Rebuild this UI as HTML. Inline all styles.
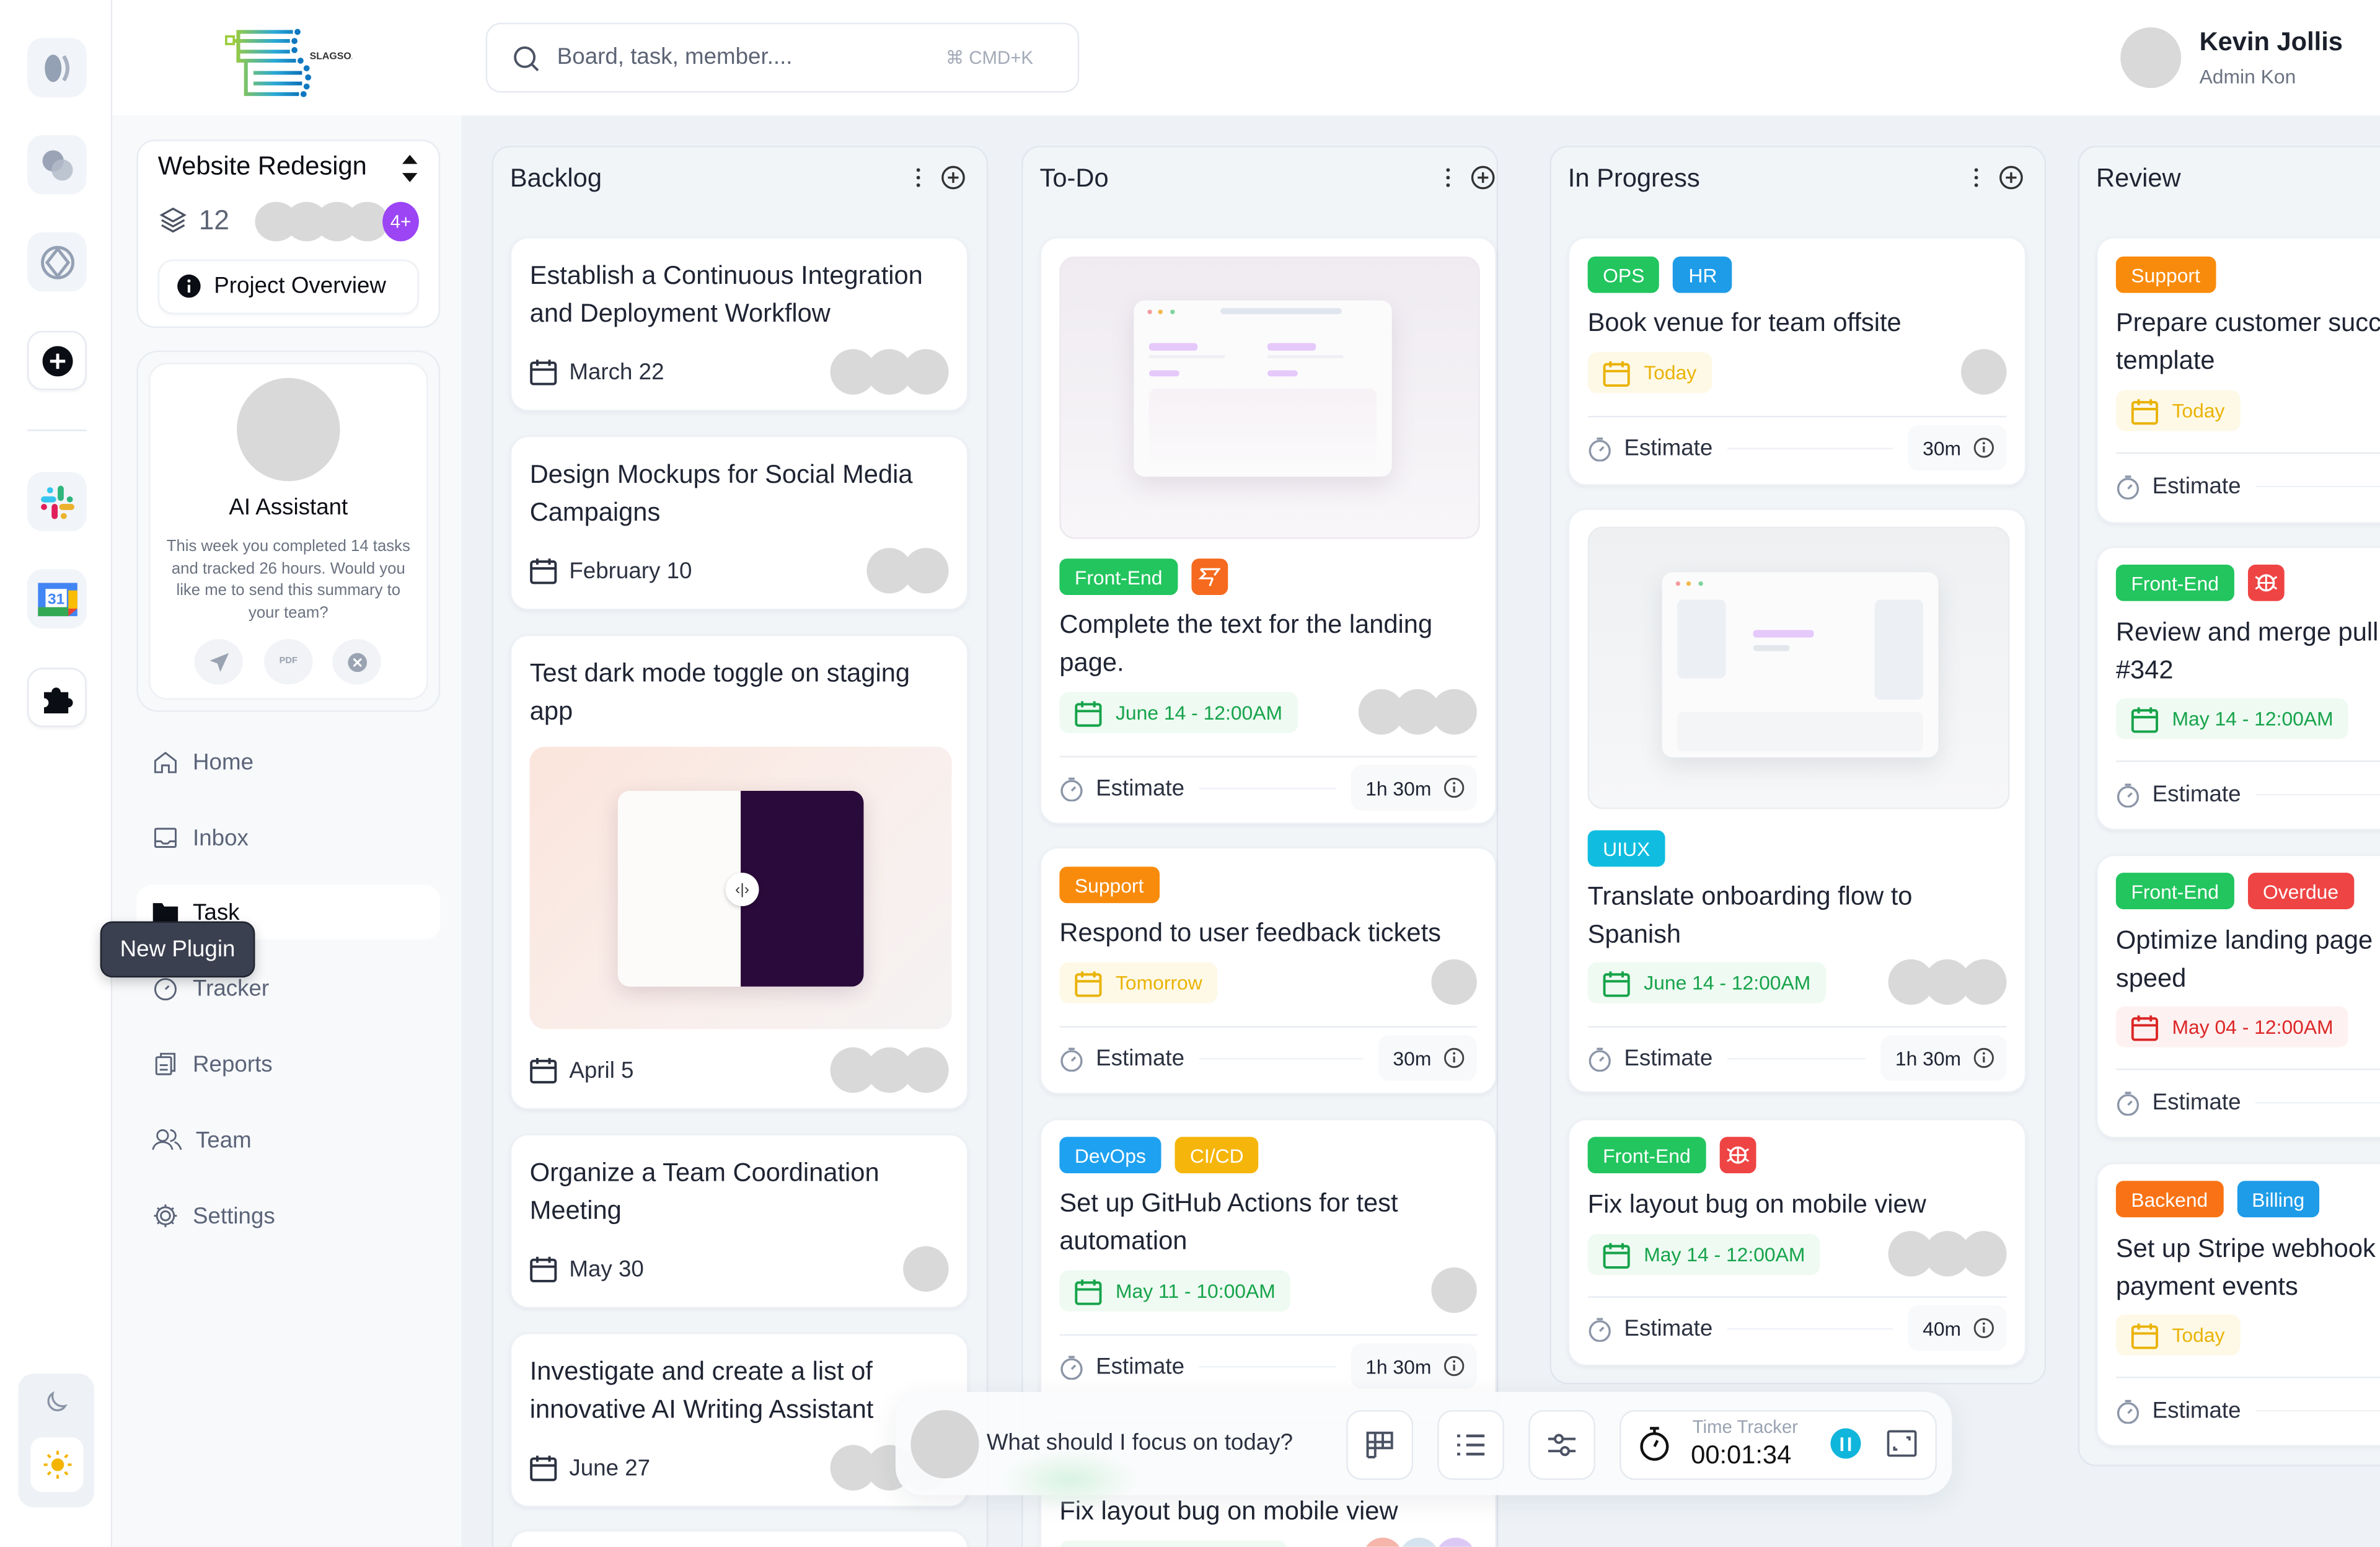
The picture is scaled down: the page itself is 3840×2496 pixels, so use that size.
<!DOCTYPE html>
<html><head><meta charset="utf-8">
<style>
*{box-sizing:border-box;margin:0;padding:0}
html,body{width:3840px;height:2494px;overflow:hidden;background:#eef2f6}
body{font-family:"Liberation Sans",Arial,sans-serif;color:#1f2433}
#w{position:absolute;left:0;top:0;width:1568px;height:1019px;transform:scale(2.44898);transform-origin:0 0;overflow:hidden;background:#eef2f6}
.a{position:absolute}
.rail{left:0;top:0;width:74px;height:1019px;background:#fff;border-right:1px solid #e8ecf1}
.tile{position:absolute;left:18px;width:39px;height:39px;border-radius:10px;background:#f1f4f8;display:flex;align-items:center;justify-content:center}
.tile.w{background:#fff;border:1px solid #e6eaf0;box-shadow:0 1px 2px rgba(0,0,0,.05)}
.hdr{left:74px;top:0;width:1494px;height:76px;background:#fff}
.side{left:74px;top:76px;width:231px;height:943px;background:#f7f9fb;border-right:1px solid #eef1f5}
.nav{position:absolute;left:100px;display:flex;align-items:center;gap:9px;font-size:15px;color:#5b6478;height:24px}
.col{position:absolute;top:96px;background:#f2f5f8;border:1px solid #e1e6ee;border-radius:12px}
.ch{position:absolute;top:108px;font-size:17px;color:#1f2433}
.card{position:absolute;background:#fff;border-radius:12px;box-shadow:0 1px 3px rgba(20,30,60,.06);border:1px solid #edf0f4;overflow:hidden}
.tt{position:absolute;left:12px;right:10px;font-size:17px;line-height:25px;color:#1f2433;white-space:nowrap}
.dt{position:absolute;left:12px;display:flex;align-items:center;gap:8px;font-size:15px;color:#2b3140;height:24px}
.pill{position:absolute;left:12px;height:27px;padding:0 10px;border-radius:6px;display:flex;align-items:center;gap:9px;font-size:13px}
.pg{background:#eefaf2;color:#16a34a}
.py{background:#fef9e7;color:#eab308}
.pr{background:#fef1f1;color:#dc2626}
.av{position:absolute;right:12px;display:flex}
.av i{display:block;width:30px;height:30px;border-radius:50%;background:#d9d9d9;margin-left:-6px}
.tags{position:absolute;left:12px;display:flex;gap:9px}
.tag{height:24px;padding:0 10px;border-radius:5px;color:#fff;font-size:13px;display:flex;align-items:center}
.ic{width:24px;height:24px;border-radius:5px;display:flex;align-items:center;justify-content:center}
.dv{position:absolute;left:12px;right:12px;height:1px;background:#e8ecf1}
.est{position:absolute;left:12px;right:12px;height:30px;display:flex;align-items:center;font-size:15px;color:#2b3140}
.est .ln{flex:1;height:1px;background:#eef1f5;margin:0 10px}
.est .ep{background:#f7f9fb;border-radius:7px;height:30px;padding:0 8px 0 10px;display:flex;align-items:center;gap:8px;font-size:13px;color:#1f2433}
.btn{position:absolute;top:929px;width:44px;height:46px;background:#fff;border:1px solid #e6eaf0;border-radius:10px;display:flex;align-items:center;justify-content:center}
</style></head><body><div id="w">

<!-- rail -->
<div class="a rail">
 <div class="tile" style="top:25px"><svg width="24" height="24" viewBox="0 0 24 24"><ellipse cx="9" cy="12" rx="5.5" ry="9" fill="#94a0b4"/><path d="M16 4q5 8 0 16" stroke="#a8b1c1" stroke-width="2.5" fill="none"/></svg></div>
 <div class="tile" style="top:89px"><svg width="24" height="24" viewBox="0 0 24 24"><circle cx="9" cy="9" r="7" fill="#9aa4b6"/><circle cx="15" cy="15" r="7" fill="#b4bcca" opacity=".85"/></svg></div>
 <div class="tile" style="top:153px"><svg width="24" height="24" viewBox="0 0 24 24" fill="none" stroke="#94a0b4" stroke-width="2"><circle cx="12" cy="12" r="10"/><path d="M12 3L5 12l7 9 7-9z"/></svg></div>
 <div class="tile w" style="top:218px"><svg width="20" height="20" viewBox="0 0 20 20"><circle cx="10" cy="10" r="10" fill="#0b0d14"/><path d="M10 5v10M5 10h10" stroke="#fff" stroke-width="2"/></svg></div>
 <div class="a" style="left:18px;top:283px;width:39px;height:1px;background:#e3e8ef"></div>
 <div class="tile" style="top:311px"><svg width="26" height="26" viewBox="0 0 26 26"><rect x="2" y="9" width="10" height="4" rx="2" fill="#36c5f0"/><rect x="6" y="3" width="4" height="4" rx="2" fill="#36c5f0"/><rect x="13" y="2" width="4" height="10" rx="2" fill="#2eb67d"/><rect x="19" y="9" width="4" height="4" rx="2" fill="#2eb67d"/><rect x="14" y="14" width="10" height="4" rx="2" fill="#ecb22e"/><rect x="15" y="20" width="4" height="4" rx="2" fill="#ecb22e"/><rect x="9" y="14" width="4" height="10" rx="2" fill="#e01e5a"/><rect x="2" y="14" width="4" height="4" rx="2" fill="#e01e5a"/></svg></div>
 <div class="tile" style="top:375px"><svg width="26" height="22" viewBox="0 0 26 22"><rect x="0" y="0" width="26" height="22" fill="#4285f4"/><rect x="0" y="16" width="20" height="6" fill="#34a853"/><rect x="20" y="5" width="6" height="12" fill="#fbbc04"/><path d="M20 17h6l-6 5z" fill="#ea4335"/><rect x="5" y="4" width="14" height="12" fill="#fff"/><text x="12" y="14" font-size="10" font-weight="bold" fill="#4285f4" text-anchor="middle" font-family="Liberation Sans">31</text></svg></div>
 <div class="tile w" style="top:440px"><svg width="24" height="22" viewBox="0 0 24 22"><path d="M3 7h5a3 3 0 1 1 6 0h5v4a3 3 0 1 1 0 6v4H3v-4a3 3 0 1 0 0-6z" fill="#0b0d14"/></svg></div>
 <div class="a" style="left:12px;top:905px;width:50px;height:88px;background:#eef1f5;border-radius:10px"></div>
 <svg class="a" style="left:28px;top:915px" width="18" height="18" viewBox="0 0 24 24"><path d="M20 15A9 9 0 0 1 9 4a8 8 0 1 0 11 11z" fill="none" stroke="#8a94a6" stroke-width="1.8"/></svg>
 <div class="a" style="left:20px;top:947px;width:35px;height:36px;background:#fff;border-radius:8px;display:flex;align-items:center;justify-content:center"><svg width="20" height="20" viewBox="0 0 24 24"><circle cx="12" cy="12" r="5" fill="#f5b400"/><g stroke="#f5b400" stroke-width="2"><path d="M12 1v3M12 20v3M1 12h3M20 12h3M4.2 4.2l2.1 2.1M17.7 17.7l2.1 2.1M4.2 19.8l2.1-2.1M17.7 6.3l2.1-2.1"/></g></svg></div>
</div>

<!-- header -->
<div class="a hdr"></div>
<svg class="a" style="left:148px;top:18px" width="84" height="46" viewBox="0 0 84 46">
 <defs><linearGradient id="lg" x1="0" x2="1"><stop offset="0" stop-color="#9ccc3c"/><stop offset=".6" stop-color="#2aa9d6"/><stop offset="1" stop-color="#0a6fb8"/></linearGradient></defs>
 <g stroke="url(#lg)" stroke-width="2.5" fill="none"><path d="M6 9h3V3h36M9 9v13h38M9 9h34M9 16h34M14 22v22h34M19 30h32M19 37h32M19 44h30"/></g>
 <rect x="1" y="6" width="5" height="5" fill="none" stroke="#9ccc3c" stroke-width="1.5"/>
 <g fill="#1078c0"><circle cx="48" cy="3" r="2"/><circle cx="46" cy="9" r="2"/><circle cx="46" cy="15" r="2"/><circle cx="50" cy="22" r="2"/><circle cx="54" cy="27" r="2"/><circle cx="55" cy="33" r="2"/><circle cx="54" cy="39" r="2"/><circle cx="52" cy="44" r="2"/></g>
 <text x="56" y="21" font-size="6.5" font-weight="bold" fill="#333" font-family="Liberation Sans">SLAGSOA</text>
</svg>
<div class="a" style="left:320px;top:15px;width:391px;height:46px;border:1px solid #e6eaf0;border-radius:10px;background:#fff"></div>
<svg class="a" style="left:337px;top:29px" width="19" height="19" viewBox="0 0 24 24" fill="none" stroke="#4b5263" stroke-width="2"><circle cx="11" cy="11" r="8"/><path d="M17 17l5 5"/></svg>
<div class="a" style="left:367px;top:29px;font-size:15px;color:#5d6475">Board, task, member....</div>
<div class="a" style="left:623px;top:31px;font-size:12px;color:#a3aab7">&#8984; CMD+K</div>
<div class="a" style="left:1397px;top:18px;width:40px;height:40px;border-radius:50%;background:#d9d9d9"></div>
<div class="a" style="left:1449px;top:18px;font-size:17px;font-weight:bold;color:#1a1f2b">Kevin Jollis</div>
<div class="a" style="left:1449px;top:43px;font-size:13px;color:#6b7280">Admin Kon</div>

<!-- side -->
<div class="a side"></div>
<div class="a" style="left:90px;top:92px;width:200px;height:124px;background:#fff;border:1px solid #e8ecf1;border-radius:12px"></div>
<div class="a" style="left:104px;top:100px;font-size:17px;color:#0b0d14">Website Redesign</div>
<svg class="a" style="left:264px;top:102px" width="12" height="18" viewBox="0 0 12 18"><path d="M6 0l5 6H1zM6 18l5-6H1z" fill="#111"/></svg>
<svg class="a" style="left:104px;top:134px" width="20" height="22" viewBox="0 0 24 24" fill="none" stroke="#4b5263" stroke-width="1.6"><path d="M12 3l9 5-9 5-9-5z"/><path d="M3 12l9 5 9-5M3 16l9 5 9-5"/></svg>
<div class="a" style="left:131px;top:135px;font-size:18px;color:#5d6475">12</div>
<div class="a" style="left:168px;top:133px;display:flex"><i style="width:28px;height:26px;border-radius:50%;background:#d9d9d9"></i><i style="width:28px;height:26px;border-radius:50%;background:#d9d9d9;margin-left:-8px"></i><i style="width:28px;height:26px;border-radius:50%;background:#d9d9d9;margin-left:-8px"></i><i style="width:28px;height:26px;border-radius:50%;background:#d9d9d9;margin-left:-8px"></i><span style="width:24px;height:26px;border-radius:50%;background:#9b45f5;margin-left:-4px;color:#fff;font-size:12px;display:flex;align-items:center;justify-content:center">4+</span></div>
<div class="a" style="left:104px;top:171px;width:172px;height:36px;border:1px solid #edf0f4;border-radius:10px;background:#fff;box-shadow:0 1px 2px rgba(0,0,0,.04)"></div>
<svg class="a" style="left:116px;top:180px" width="17" height="17" viewBox="0 0 20 20"><circle cx="10" cy="10" r="9" fill="#0b0d14"/><rect x="9" y="9" width="2" height="6" fill="#fff"/><circle cx="10" cy="6" r="1.2" fill="#fff"/></svg>
<div class="a" style="left:141px;top:180px;font-size:15px;color:#0b0d14">Project Overview</div>

<div class="a" style="left:90px;top:231px;width:200px;height:238px;border:1px solid #e8ecf1;border-radius:14px"></div>
<div class="a" style="left:98px;top:239px;width:184px;height:222px;background:#fff;border:1px solid #edf0f4;border-radius:12px"></div>
<div class="a" style="left:156px;top:249px;width:68px;height:68px;border-radius:50%;background:#d9d9d9"></div>
<div class="a" style="left:98px;top:326px;width:184px;text-align:center;font-size:15px;color:#0b0d14">AI Assistant</div>
<div class="a" style="left:106px;top:353px;width:168px;text-align:center;font-size:10.5px;line-height:14.7px;color:#6b7280">This week you completed 14 tasks and tracked 26 hours. Would you like me to send this summary to your team?</div>
<div class="a" style="left:128px;top:421px;width:32px;height:30px;border-radius:50%;background:#f1f3f6;display:flex;align-items:center;justify-content:center"><svg width="15" height="15" viewBox="0 0 24 24"><path d="M22 2L2 10l8 3 3 9z" fill="#9aa3b2"/></svg></div>
<div class="a" style="left:174px;top:421px;width:32px;height:30px;border-radius:50%;background:#f1f3f6;display:flex;align-items:center;justify-content:center;font-size:6px;color:#9aa3b2;font-weight:bold">PDF</div>
<div class="a" style="left:219px;top:421px;width:32px;height:30px;border-radius:50%;background:#f1f3f6;display:flex;align-items:center;justify-content:center"><svg width="15" height="15" viewBox="0 0 24 24"><circle cx="12" cy="12" r="10" fill="#9aa3b2"/><path d="M8 8l8 8M16 8l-8 8" stroke="#fff" stroke-width="2"/></svg></div>

<div class="nav" style="top:490px"><svg width="18" height="18" viewBox="0 0 24 24" fill="none" stroke="#5b6478" stroke-width="1.6"><path d="M3 11l9-7 9 7v10h-6v-6H9v6H3z"/></svg>Home</div>
<div class="nav" style="top:540px"><svg width="18" height="18" viewBox="0 0 24 24" fill="none" stroke="#5b6478" stroke-width="1.6"><rect x="3" y="4" width="18" height="16" rx="1"/><path d="M3 15h5l2 2h4l2-2h5"/></svg>Inbox</div>
<div class="a" style="left:90px;top:583px;width:200px;height:36px;background:#fff;border-radius:10px"></div>
<div class="nav" style="top:589px;color:#0b0d14"><svg width="18" height="16" viewBox="0 0 24 20"><path d="M1 2h8l2 3h12v14H1z" fill="#0b0d14"/></svg>Task</div>
<div class="nav" style="top:639px"><svg width="18" height="18" viewBox="0 0 24 24" fill="none" stroke="#5b6478" stroke-width="1.6"><circle cx="12" cy="13" r="9"/><path d="M12 13l3-3"/></svg>Tracker</div>
<div class="nav" style="top:689px"><svg width="18" height="18" viewBox="0 0 24 24" fill="none" stroke="#5b6478" stroke-width="1.6"><rect x="4" y="6" width="13" height="15" rx="1"/><path d="M8 6V3h12v15h-3M7 13h7M7 17h7"/></svg>Reports</div>
<div class="nav" style="top:739px"><svg width="20" height="18" viewBox="0 0 28 24" fill="none" stroke="#5b6478" stroke-width="1.6"><circle cx="10" cy="8" r="5"/><path d="M1 21c1-5 5-7 9-7s8 2 9 7"/><path d="M17 3a5 5 0 0 1 0 10M21 14c3 1 5 4 6 7"/></svg>Team</div>
<div class="nav" style="top:789px"><svg width="18" height="18" viewBox="0 0 24 24" fill="none" stroke="#5b6478" stroke-width="1.6"><circle cx="12" cy="12" r="4"/><path d="M12 2v3M12 19v3M2 12h3M19 12h3M5 5l2 2M17 17l2 2M5 19l2-2M17 7l2-2"/><circle cx="12" cy="12" r="7.5"/></svg>Settings</div>
<div class="a" style="left:66px;top:607px;width:102px;height:37px;background:#3b4050;border-radius:8px;border:1px solid #1f2330;box-shadow:0 3px 8px rgba(0,0,0,.2);color:#fff;font-size:15px;display:flex;align-items:center;justify-content:center">New Plugin</div>

<!-- columns -->
<div class="col" style="left:324px;width:327px;height:940px"></div>
<div class="col" style="left:673px;width:314px;height:940px"></div>
<div class="col" style="left:1021px;width:327px;height:816px"></div>
<div class="col" style="left:1369px;width:260px;height:870px"></div>
<div class="ch" style="left:336px">Backlog</div>
<div class="ch" style="left:685px">To-Do</div>
<div class="ch" style="left:1033px">In Progress</div>
<div class="ch" style="left:1381px">Review</div>
<svg width="0" height="0" style="position:absolute"><defs>
<g id="hm"><circle cx="2" cy="3" r="1.2" fill="#333"/><circle cx="2" cy="8" r="1.2" fill="#333"/><circle cx="2" cy="13" r="1.2" fill="#333"/><circle cx="25" cy="8" r="7" fill="none" stroke="#333" stroke-width="1.4"/><path d="M25 4.5v7M21.5 8h7" stroke="#333" stroke-width="1.4"/></g>
<g id="cal"><rect x="1" y="3" width="16" height="14" rx="1.5" fill="none" stroke="currentColor" stroke-width="1.6"/><path d="M1 7.5h16M5 1v4M13 1v4" stroke="currentColor" stroke-width="1.6"/></g>
<g id="sw"><circle cx="8" cy="10" r="6.5" fill="none" stroke="#8c96a8" stroke-width="1.4"/><path d="M6 2h4M8 10l2.5-2.5" stroke="#8c96a8" stroke-width="1.4"/></g>
<g id="inf"><circle cx="7" cy="7" r="6" fill="none" stroke="#444" stroke-width="1.2"/><path d="M7 6v4" stroke="#444" stroke-width="1.3"/><circle cx="7" cy="4" r=".8" fill="#444"/></g>
<g id="bug"><circle cx="8" cy="8" r="5" fill="none" stroke="#fff" stroke-width="1.4"/><path d="M8 3v10M3 8h10M1 4l3 2M15 4l-3 2M1 12l3-2M15 12l-3-2" stroke="#fff" stroke-width="1.2"/></g>
</defs></svg>
<svg class="a" style="left:603px;top:109px" width="34" height="16"><use href="#hm"/></svg>
<svg class="a" style="left:952px;top:109px" width="34" height="16"><use href="#hm"/></svg>
<svg class="a" style="left:1300px;top:109px" width="34" height="16"><use href="#hm"/></svg>

<!-- BACKLOG -->
<div class="card" style="left:336px;top:156px;width:302px;height:115px">
 <div class="tt" style="top:12px">Establish a Continuous Integration<br>and Deployment Workflow</div>
 <div class="dt" style="top:76px"><svg width="18" height="18" style="color:#2b3140"><use href="#cal"/></svg>March 22</div>
 <div class="av" style="top:73px"><i></i><i></i><i></i></div>
</div>
<div class="card" style="left:336px;top:287px;width:302px;height:115px">
 <div class="tt" style="top:12px">Design Mockups for Social Media<br>Campaigns</div>
 <div class="dt" style="top:76px"><svg width="18" height="18" style="color:#2b3140"><use href="#cal"/></svg>February 10</div>
 <div class="av" style="top:73px"><i></i><i></i></div>
</div>
<div class="card" style="left:336px;top:418px;width:302px;height:313px">
 <div class="tt" style="top:12px">Test dark mode toggle on staging<br>app</div>
 <div class="a" style="left:12px;top:73px;width:278px;height:186px;border-radius:10px;background:linear-gradient(135deg,#fbe5dc 0%,#f9efec 60%,#f5f2f3 100%);overflow:hidden">
  <div class="a" style="left:58px;top:29px;width:162px;height:129px;border-radius:8px;overflow:hidden;box-shadow:0 4px 14px rgba(60,20,60,.15)">
   <div class="a" style="left:0;top:0;width:81px;height:129px;background:#fcfbfa"></div>
   <div class="a" style="left:81px;top:0;width:81px;height:129px;background:#2a0a3a"></div>
  </div>
  <div class="a" style="left:129px;top:83px;width:22px;height:22px;border-radius:50%;background:#fff;box-shadow:0 1px 3px rgba(0,0,0,.2);font-size:10px;display:flex;align-items:center;justify-content:center;color:#333">&#8249;|&#8250;</div>
 </div>
 <div class="dt" style="top:274px"><svg width="18" height="18" style="color:#2b3140"><use href="#cal"/></svg>April 5</div>
 <div class="av" style="top:271px"><i></i><i></i><i></i></div>
</div>
<div class="card" style="left:336px;top:747px;width:302px;height:115px">
 <div class="tt" style="top:12px">Organize a Team Coordination<br>Meeting</div>
 <div class="dt" style="top:76px"><svg width="18" height="18" style="color:#2b3140"><use href="#cal"/></svg>May 30</div>
 <div class="av" style="top:73px"><i></i></div>
</div>
<div class="card" style="left:336px;top:878px;width:302px;height:115px">
 <div class="tt" style="top:12px">Investigate and create a list of<br>innovative AI Writing Assistant</div>
 <div class="dt" style="top:76px"><svg width="18" height="18" style="color:#2b3140"><use href="#cal"/></svg>June 27</div>
 <div class="av" style="top:73px"><i></i><i></i><i></i></div>
</div>
<div class="card" style="left:336px;top:1008px;width:302px;height:60px"></div>

<!-- TODO -->
<div class="card" style="left:685px;top:156px;width:301px;height:387px">
 <div class="a" style="left:12px;top:12px;width:277px;height:186px;border-radius:10px;border:1px solid #ece8ee;background:linear-gradient(#efebf1,#f8f6f9)">
  <div class="a" style="left:48px;top:28px;width:170px;height:116px;background:#fbfbfc;border-radius:7px;box-shadow:0 6px 16px rgba(80,60,90,.12)">
   <i class="a" style="left:9px;top:6px;width:3px;height:3px;border-radius:50%;background:#f39c9c"></i><i class="a" style="left:16px;top:6px;width:3px;height:3px;border-radius:50%;background:#f3b94c"></i><i class="a" style="left:24px;top:6px;width:3px;height:3px;border-radius:50%;background:#7fd49a"></i>
   <i class="a" style="left:57px;top:5px;width:80px;height:4px;border-radius:2px;background:#e1e6ee"></i>
   <i class="a" style="left:10px;top:28px;width:32px;height:5px;border-radius:2px;background:#e6c9fb"></i><i class="a" style="left:88px;top:28px;width:32px;height:5px;border-radius:2px;background:#e6c9fb"></i>
   <i class="a" style="left:10px;top:36px;width:50px;height:2px;background:#eef0f4"></i><i class="a" style="left:88px;top:36px;width:50px;height:2px;background:#eef0f4"></i>
   <i class="a" style="left:10px;top:46px;width:20px;height:4px;border-radius:2px;background:#e6c9fb"></i><i class="a" style="left:88px;top:46px;width:20px;height:4px;border-radius:2px;background:#e6c9fb"></i>
   <i class="a" style="left:10px;top:58px;width:150px;height:50px;border-radius:5px;background:linear-gradient(#f6f1f5,#fbfafb)"></i>
  </div>
 </div>
 <div class="tags" style="top:211px"><div class="tag" style="background:#22c55e">Front-End</div><div class="ic" style="background:#f56a1e"><svg width="16" height="14" viewBox="0 0 16 14" fill="none" stroke="#fff" stroke-width="1.3"><path d="M2 2h12l-3 4M2 2l3 3-3 3h8M10 8l-2 5"/></svg></div></div>
 <div class="tt" style="top:242px">Complete the text for the landing<br>page.</div>
 <div class="pill pg" style="top:299px"><svg width="18" height="18" style="color:#16a34a"><use href="#cal"/></svg>June 14 - 12:00AM</div>
 <div class="av" style="top:297px"><i></i><i></i><i></i></div>
 <div class="dv" style="top:341px"></div>
 <div class="est" style="top:347px"><svg width="16" height="17" style="margin-right:8px"><use href="#sw"/></svg>Estimate<span class="ln"></span><span class="ep">1h 30m<svg width="14" height="14"><use href="#inf"/></svg></span></div>
</div>
<div class="card" style="left:685px;top:558px;width:301px;height:163px">
 <div class="tags" style="top:12px"><div class="tag" style="background:#f98b0c">Support</div></div>
 <div class="tt" style="top:43px">Respond to user feedback tickets</div>
 <div class="pill py" style="top:75px"><svg width="18" height="18" style="color:#eab308"><use href="#cal"/></svg>Tomorrow</div>
 <div class="av" style="top:73px"><i></i></div>
 <div class="dv" style="top:117px"></div>
 <div class="est" style="top:123px"><svg width="16" height="17" style="margin-right:8px"><use href="#sw"/></svg>Estimate<span class="ln"></span><span class="ep">30m<svg width="14" height="14"><use href="#inf"/></svg></span></div>
</div>
<div class="card" style="left:685px;top:737px;width:301px;height:200px">
 <div class="tags" style="top:11px"><div class="tag" style="background:#1ea1f1">DevOps</div><div class="tag" style="background:#f5b50b">CI/CD</div></div>
 <div class="tt" style="top:42px">Set up GitHub Actions for test<br>automation</div>
 <div class="pill pg" style="top:99px"><svg width="18" height="18" style="color:#16a34a"><use href="#cal"/></svg>May 11 - 10:00AM</div>
 <div class="av" style="top:97px"><i></i></div>
 <div class="dv" style="top:141px"></div>
 <div class="est" style="top:147px"><svg width="16" height="17" style="margin-right:8px"><use href="#sw"/></svg>Estimate<span class="ln"></span><span class="ep">1h 30m<svg width="14" height="14"><use href="#inf"/></svg></span></div>
</div>
<div class="card" style="left:685px;top:950px;width:301px;height:120px">
 <div class="tt" style="top:32px">Fix layout bug on mobile view</div>
 <div class="pill pg" style="top:64px;width:150px"></div>
 <div class="a" style="left:212px;top:62px;display:flex"><i style="width:26px;height:26px;border-radius:50%;background:#f5b5aa"></i><i style="width:26px;height:26px;border-radius:50%;background:#d5e3ee;margin-left:-2px"></i><i style="width:26px;height:26px;border-radius:50%;background:#dcc8f5;margin-left:-2px"></i></div>
</div>

<!-- IN PROGRESS -->
<div class="card" style="left:1033px;top:156px;width:302px;height:164px">
 <div class="tags" style="top:12px"><div class="tag" style="background:#22c55e">OPS</div><div class="tag" style="background:#1e9ce8">HR</div></div>
 <div class="tt" style="top:43px">Book venue for team offsite</div>
 <div class="pill py" style="top:75px"><svg width="18" height="18" style="color:#eab308"><use href="#cal"/></svg>Today</div>
 <div class="av" style="top:73px"><i></i></div>
 <div class="dv" style="top:117px"></div>
 <div class="est" style="top:123px"><svg width="16" height="17" style="margin-right:8px"><use href="#sw"/></svg>Estimate<span class="ln"></span><span class="ep">30m<svg width="14" height="14"><use href="#inf"/></svg></span></div>
</div>
<div class="card" style="left:1033px;top:335px;width:302px;height:385px">
 <div class="a" style="left:12px;top:11px;width:278px;height:186px;border-radius:10px;border:1px solid #e9ecef;background:linear-gradient(#eef0f2,#f6f7f8)">
  <div class="a" style="left:48px;top:29px;width:182px;height:122px;background:#fbfbfc;border-radius:7px;box-shadow:0 6px 16px rgba(60,70,90,.12)">
   <i class="a" style="left:9px;top:6px;width:3px;height:3px;border-radius:50%;background:#f39c9c"></i><i class="a" style="left:16px;top:6px;width:3px;height:3px;border-radius:50%;background:#f3b94c"></i><i class="a" style="left:24px;top:6px;width:3px;height:3px;border-radius:50%;background:#7fd49a"></i>
   <i class="a" style="left:10px;top:18px;width:32px;height:52px;border-radius:4px;background:#eceff3"></i>
   <i class="a" style="left:140px;top:18px;width:32px;height:66px;border-radius:4px;background:#eceff3"></i>
   <i class="a" style="left:60px;top:38px;width:40px;height:5px;border-radius:2px;background:#e6c9fb"></i>
   <i class="a" style="left:60px;top:48px;width:24px;height:4px;border-radius:2px;background:#e3e6eb"></i>
   <i class="a" style="left:10px;top:92px;width:162px;height:26px;border-radius:4px;background:#f4f5f7"></i>
  </div>
 </div>
 <div class="tags" style="top:211px"><div class="tag" style="background:#10bde0">UIUX</div></div>
 <div class="tt" style="top:242px">Translate onboarding flow to<br>Spanish</div>
 <div class="pill pg" style="top:298px"><svg width="18" height="18" style="color:#16a34a"><use href="#cal"/></svg>June 14 - 12:00AM</div>
 <div class="av" style="top:296px"><i></i><i></i><i></i></div>
 <div class="dv" style="top:340px"></div>
 <div class="est" style="top:346px"><svg width="16" height="17" style="margin-right:8px"><use href="#sw"/></svg>Estimate<span class="ln"></span><span class="ep">1h 30m<svg width="14" height="14"><use href="#inf"/></svg></span></div>
</div>
<div class="card" style="left:1033px;top:737px;width:302px;height:163px">
 <div class="tags" style="top:11px"><div class="tag" style="background:#22c55e">Front-End</div><div class="ic" style="background:#ef4444"><svg width="16" height="16"><use href="#bug"/></svg></div></div>
 <div class="tt" style="top:43px">Fix layout bug on mobile view</div>
 <div class="pill pg" style="top:75px"><svg width="18" height="18" style="color:#16a34a"><use href="#cal"/></svg>May 14 - 12:00AM</div>
 <div class="av" style="top:73px"><i></i><i></i><i></i></div>
 <div class="dv" style="top:116px"></div>
 <div class="est" style="top:122px"><svg width="16" height="17" style="margin-right:8px"><use href="#sw"/></svg>Estimate<span class="ln"></span><span class="ep">40m<svg width="14" height="14"><use href="#inf"/></svg></span></div>
</div>

<!-- REVIEW -->
<div class="card" style="left:1381px;top:156px;width:302px;height:189px">
 <div class="tags" style="top:12px"><div class="tag" style="background:#f98b0c">Support</div></div>
 <div class="tt" style="top:43px">Prepare customer success<br>template</div>
 <div class="pill py" style="top:100px"><svg width="18" height="18" style="color:#eab308"><use href="#cal"/></svg>Today</div>
 <div class="dv" style="top:141px"></div>
 <div class="est" style="top:148px"><svg width="16" height="17" style="margin-right:8px"><use href="#sw"/></svg>Estimate<span class="ln"></span></div>
</div>
<div class="card" style="left:1381px;top:360px;width:302px;height:187px">
 <div class="tags" style="top:11px"><div class="tag" style="background:#22c55e">Front-End</div><div class="ic" style="background:#ef4444"><svg width="16" height="16"><use href="#bug"/></svg></div></div>
 <div class="tt" style="top:43px">Review and merge pull request<br>#342</div>
 <div class="pill pg" style="top:99px"><svg width="18" height="18" style="color:#16a34a"><use href="#cal"/></svg>May 14 - 12:00AM</div>
 <div class="dv" style="top:140px"></div>
 <div class="est" style="top:147px"><svg width="16" height="17" style="margin-right:8px"><use href="#sw"/></svg>Estimate<span class="ln"></span></div>
</div>
<div class="card" style="left:1381px;top:563px;width:302px;height:187px">
 <div class="tags" style="top:11px"><div class="tag" style="background:#22c55e">Front-End</div><div class="tag" style="background:#ef4444">Overdue</div></div>
 <div class="tt" style="top:43px">Optimize landing page load<br>speed</div>
 <div class="pill pr" style="top:99px"><svg width="18" height="18" style="color:#dc2626"><use href="#cal"/></svg>May 04 - 12:00AM</div>
 <div class="dv" style="top:140px"></div>
 <div class="est" style="top:147px"><svg width="16" height="17" style="margin-right:8px"><use href="#sw"/></svg>Estimate<span class="ln"></span></div>
</div>
<div class="card" style="left:1381px;top:766px;width:302px;height:187px">
 <div class="tags" style="top:11px"><div class="tag" style="background:#f97316">Backend</div><div class="tag" style="background:#1e9ce8">Billing</div></div>
 <div class="tt" style="top:43px">Set up Stripe webhook for<br>payment events</div>
 <div class="pill py" style="top:99px"><svg width="18" height="18" style="color:#eab308"><use href="#cal"/></svg>Today</div>
 <div class="dv" style="top:140px"></div>
 <div class="est" style="top:147px"><svg width="16" height="17" style="margin-right:8px"><use href="#sw"/></svg>Estimate<span class="ln"></span></div>
</div>

<!-- bottom bar -->
<div class="a" style="left:590px;top:917px;width:696px;height:68px;background:rgba(250,251,252,.94);border-radius:18px;box-shadow:0 4px 18px rgba(30,40,60,.08)"></div>
<div class="a" style="left:660px;top:955px;width:90px;height:40px;background:radial-gradient(#d9f3e2,rgba(255,255,255,0) 70%)"></div>
<div class="a" style="left:600px;top:929px;width:45px;height:45px;border-radius:50%;background:#d6d6d6"></div>
<div class="a" style="left:650px;top:942px;font-size:15px;color:#2b3140">What should I focus on today?</div>
<div class="btn" style="left:887px"><svg width="20" height="20" viewBox="0 0 20 20" fill="none" stroke="#4b5263" stroke-width="1.6"><path d="M2 2h16v10H2zM2 2v16M7 2v16M12 2v10M2 8h16M2 18h5"/></svg></div>
<div class="btn" style="left:947px"><svg width="20" height="18" viewBox="0 0 20 18" stroke="#4b5263" stroke-width="1.8"><path d="M1 3h2M7 3h12M1 9h2M7 9h12M1 15h2M7 15h12"/></svg></div>
<div class="btn" style="left:1007px"><svg width="20" height="20" viewBox="0 0 20 20" fill="none" stroke="#4b5263" stroke-width="1.6"><path d="M1 6h18M1 14h18"/><circle cx="8" cy="6" r="2.5" fill="#fff"/><circle cx="12" cy="14" r="2.5" fill="#fff"/></svg></div>
<div class="a" style="left:1067px;top:929px;width:209px;height:46px;background:#fff;border:1px solid #e6eaf0;border-radius:10px"></div>
<svg class="a" style="left:1079px;top:939px" width="22" height="24" viewBox="0 0 22 24" fill="none" stroke="#111" stroke-width="1.8"><circle cx="11" cy="14" r="8.5"/><path d="M8 2h6M11 2v3M11 14l2-4"/></svg>
<div class="a" style="left:1115px;top:933px;font-size:12px;color:#9aa3b2">Time Tracker</div>
<div class="a" style="left:1114px;top:949px;font-size:17px;color:#111">00:01:34</div>
<div class="a" style="left:1206px;top:941px;width:20px;height:20px;border-radius:50%;background:#10b5dc;display:flex;align-items:center;justify-content:center"><svg width="8" height="9"><path d="M1.5 0v9M6.5 0v9" stroke="#fff" stroke-width="1.8"/></svg></div>
<svg class="a" style="left:1243px;top:942px" width="20" height="18" viewBox="0 0 20 18" fill="none" stroke="#4b5263" stroke-width="1.5"><rect x="1" y="1" width="18" height="16" rx="1"/><path d="M13 5h2v2M5 11v2h2"/></svg>

</div></body></html>
